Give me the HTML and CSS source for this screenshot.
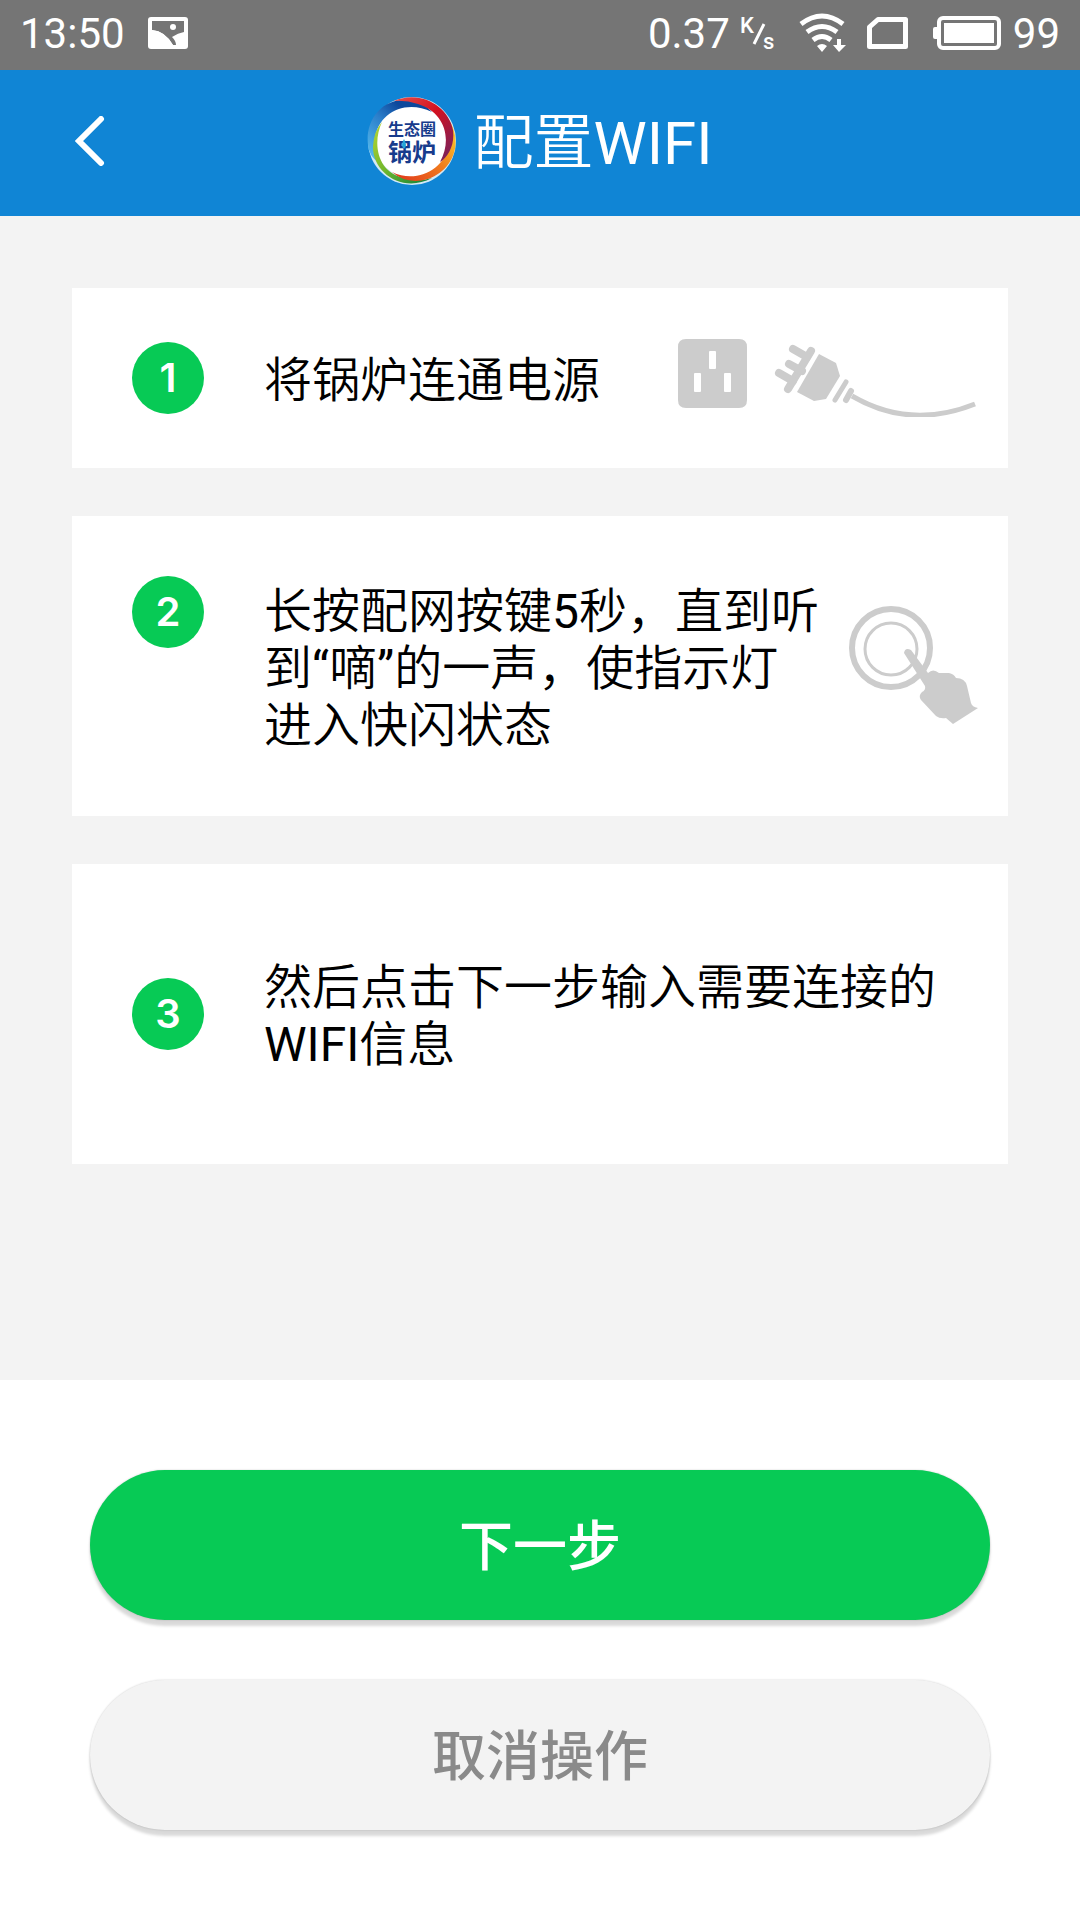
FILE: index.html
```html
<!DOCTYPE html>
<html lang="zh-CN">
<head>
<meta charset="utf-8">
<meta name="viewport" content="width=device-width, initial-scale=1">
<title>配置WIFI</title>
<link rel="stylesheet" href="styles.css">
</head>
<body>
<div class="status-bar">
  <div class="status-group status-left">
    <time>13:50</time>
    <svg width="40" height="32" viewBox="0 0 40 32" aria-hidden="true">
      <rect width="40" height="32" rx="3" fill="#fff"/>
      <path d="M4 4H36V15Q30 16 24 20Q28 24 28 28H25Q17 14 4 13Z" fill="#757575"/>
      <path d="M4 13Q17 14 25 28H4Z" fill="#fff"/>
      <circle cx="25" cy="10" r="3" fill="#fff"/>
    </svg>
  </div>
  <div class="status-group status-right">
    <span>0.37</span>
    <svg class="rate-unit" width="40" height="48" viewBox="0 0 40 48">
      <text x="2" y="24">K</text>
      <path d="M16 35L26 15" stroke="#fff" stroke-width="3"/>
      <text x="25" y="40">s</text>
    </svg>
    <svg class="wifi" width="48" height="40" viewBox="0 0 48 40" aria-hidden="true">
      <g fill="none" stroke="#fff" stroke-width="5">
        <path d="M2 11Q23 -5 44 11"/>
        <path d="M8 19Q23 8 38 19"/>
        <path d="M14 27Q23 20 32 27"/>
      </g>
      <path d="M18 33Q23 29 28 33L23 39ZM38 26H42V32H47L40 39L34 32H38Z" fill="#fff"/>
    </svg>
    <svg class="sim" width="42" height="32" viewBox="0 0 42 32" aria-hidden="true">
      <path d="M11 2.5H38.500V29.500H2.500V10Z" fill="none" stroke="#fff" stroke-width="5" stroke-linejoin="round"/>
    </svg>
    <svg width="68" height="34" viewBox="0 0 68 34" aria-hidden="true">
      <rect x="6" y="2" width="60" height="30" rx="4" fill="none" stroke="#fff" stroke-width="4"/>
      <rect x="11" y="7" width="50" height="20" fill="#fff"/>
      <path d="M4 11V23H2Q0 23 0 21V13Q0 11 2 11Z" fill="#fff"/>
    </svg>
    <span class="battery-level">99</span>
  </div>
</div>

<header class="app-bar">
  <button class="back" type="button" aria-label="返回">
    <svg width="30" height="50" viewBox="0 0 30 50" aria-hidden="true">
      <path d="M26 3L4 25L26 47" fill="none" stroke="#fff" stroke-width="6" stroke-linecap="round"/>
    </svg>
  </button>
  <div class="brand">
    <svg class="logo" width="90" height="90" viewBox="0 0 90 90">
      <defs>
        <linearGradient id="blue" x1="0" y1="1" x2="1" y2="0"><stop offset="0" stop-color="#5cc4f2"/><stop offset=".45" stop-color="#2b7fcb"/><stop offset=".7" stop-color="#0d489c"/></linearGradient>
        <linearGradient id="red" x1="0" y1="0" x2="1" y2="1"><stop offset="0" stop-color="#e8504a"/><stop offset=".45" stop-color="#d4111f"/><stop offset="1" stop-color="#6d2463"/></linearGradient>
        <linearGradient id="green" x1="0" y1="0" x2="1" y2="1"><stop offset="0" stop-color="#b9d733"/><stop offset=".5" stop-color="#6fb62c"/><stop offset="1" stop-color="#087c3d"/></linearGradient>
        <linearGradient id="orange" x1="0" y1="1" x2="1" y2="0"><stop offset="0" stop-color="#df321b"/><stop offset=".5" stop-color="#f07b1e"/><stop offset="1" stop-color="#ffe32d"/></linearGradient>
      </defs>
      <circle cx="45" cy="45" r="44" fill="#d4e9f5"/>
      <circle cx="45" cy="45" r="37" fill="#fff"/>
      <path d="M1 49C-2 25 14 3 39 4Q56 5 65 16C38 3 11 17 8 43Q5 57 11 66Q2 60 1 49Z" fill="url(#blue)"/>
      <path d="M15 26C5 47 10 78 39 82Q52 86 65 82C35 98 5 76 6 50Q7 35 15 26Z" fill="url(#green)"/>
      <path d="M25 76C49 88 78 74 82 48Q84 34 79 20C97 42 89 73 61 83Q40 89 25 76Z" fill="url(#orange)"/>
      <path d="M27 5C54 -7 82 11 86 34C88 49 81 61 73 66C86 42 77 16 51 8Q39 4 27 5Z" fill="url(#red)"/>
      <text class="logo-top" x="45" y="39">生态圈</text>
      <text class="logo-bottom" x="45" y="65">锅炉</text>
      <path d="M37 43Q41 50 37 53Q33 50 37 43Z" fill="#24a6d8"/>
    </svg>
    <h1>配置WIFI</h1>
  </div>
</header>

<main>
  <ol class="steps">
    <li class="step step-short">
      <span class="badge">1</span>
      <p>将锅炉连通电源</p>
      <svg width="300" height="78" viewBox="0 0 300 78" aria-hidden="true">
        <g fill="#ccc">
          <path fill-rule="evenodd" d="M8 0H61Q69 0 69 8V61Q69 69 61 69H8Q0 69 0 61V8Q0 0 8 0ZM32 12Q31 12 31 13V29Q31 30 32 30H37Q38 30 38 29V13Q38 12 37 12ZM17 34Q16 34 16 35V52Q16 53 17 53H22Q23 53 23 52V35Q23 34 22 34ZM47 34Q46 34 46 35V52Q46 53 47 53H52Q53 53 53 52V35Q53 34 52 34Z"/>
          <path d="M141 15L158 24L162 37L148 60L136 62L119 53Z"/>
        </g>
        <g fill="none" stroke="#ccc" stroke-linecap="round">
          <path d="M133 12L110 50" stroke-width="8"/>
          <path d="M115 10L129 18M111 25L124 32M101 34L115 42" stroke-width="8"/>
          <path d="M168 43L157 61" stroke-width="5"/>
          <path d="M173 52L168 61" stroke-width="6"/>
          <path d="M174 57Q232 91 297 65" stroke-width="5" stroke-linecap="butt"/>
        </g>
      </svg>
    </li>
    <li class="step">
      <span class="badge badge-top">2</span>
      <p>长按配网按键5秒，直到听<br>到“嘀”的一声，使指示灯<br>进入快闪状态</p>
      <svg width="129" height="120" viewBox="0 0 129 120" aria-hidden="true">
        <circle cx="42" cy="42" r="39" fill="none" stroke="#ccc" stroke-width="6"/>
        <circle cx="42" cy="43" r="26" fill="none" stroke="#ccc" stroke-width="3"/>
        <path d="M55 47Q56 41 62 44L79 67Q84 62 90 67L100 67Q105 68 107 72Q116 72 118 80L122 97Q123 101 129 102L104 118L97 112Q91 113 87 110L72 94Q69 90 73 86Q77 84 76 80Z" fill="#ccc"/>
      </svg>
    </li>
    <li class="step">
      <span class="badge">3</span>
      <p>然后点击下一步输入需要连接的WIFI信息</p>
    </li>
  </ol>
  <div class="actions">
    <button class="action primary" type="button">下一步</button>
    <button class="action secondary" type="button">取消操作</button>
  </div>
</main>
</body>
</html>
```
FILE: styles.css
```css
* {
  box-sizing: border-box;
  margin: 0;
  padding: 0;
}

body {
  background: #fff;
  color: #000;
  font-family: Roboto, "Noto Sans CJK SC DemiLight", "Noto Sans CJK SC", sans-serif;
  font-weight: 400;
}

svg {
  display: block;
  flex: none;
}

button {
  border: 0;
  font-family: inherit;
  cursor: pointer;
}

.status-bar {
  display: flex;
  justify-content: space-between;
  height: 70px;
  padding: 0 20px 4px;
  background: #757575;
  color: #fff;
  font-size: 42px;
}

.status-group {
  display: flex;
  align-items: center;
}

.status-left {
  gap: 23px;
}

.rate-unit {
  margin: 0 21px 0 8px;
  fill: #fff;
  font-size: 22px;
  font-weight: 500;
}

.sim {
  margin: 0 24px 0 20px;
}

.battery-level {
  margin-left: 12px;
}

.app-bar {
  display: grid;
  grid-template-columns: 1fr auto 1fr;
  align-items: center;
  height: 146px;
  padding-bottom: 4px;
  background: #1085d5;
  color: #fff;
}

.back {
  justify-self: start;
  padding: 24px 75px;
  background: none;
}

.brand {
  display: flex;
  align-items: center;
  gap: 16px;
}

.logo {
  fill: #173b8c;
  font-family: "Noto Sans CJK SC", sans-serif;
  font-weight: 700;
  text-anchor: middle;
}

.logo-top {
  font-size: 16px;
}

.logo-bottom {
  font-size: 24px;
}

h1 {
  padding-top: 6px;
  font-size: 60px;
  font-weight: 400;
  line-height: 72px;
}

.steps {
  display: flex;
  flex-direction: column;
  gap: 48px;
  padding: 72px 72px 216px;
  background: #f3f3f3;
  list-style: none;
}

.step {
  display: flex;
  align-items: center;
  min-height: 300px;
  padding: 60px 30px 60px 60px;
  background: #fff;
}

.step-short {
  min-height: 180px;
  padding-block: 50px;
}

.step p {
  flex: 1;
  padding-top: 4px;
  font-size: 48px;
  line-height: 57px;
}

.badge {
  display: grid;
  place-items: center;
  flex: none;
  width: 72px;
  height: 72px;
  margin-right: 60px;
  padding-bottom: 2px;
  border-radius: 50%;
  background: #07ca55;
  color: #fff;
  font-family: Inter, sans-serif;
  font-size: 40px;
  font-weight: 600;
}

.badge-top {
  align-self: flex-start;
}

.actions {
  display: flex;
  flex-direction: column;
  gap: 60px;
  padding: 90px;
}

.action {
  height: 150px;
  padding-bottom: 6px;
  border-radius: 75px;
  box-shadow: 0 6px 3px rgba(0, 0, 0, 0.15), 0 0 2px rgba(0, 0, 0, 0.2);
  font-family: Roboto, "Noto Sans CJK SC", sans-serif;
  font-size: 54px;
  font-weight: 500;
}

.primary {
  background: #07ca55;
  color: #fff;
}

.secondary {
  background: #f3f3f3;
  color: #8a8a8a;
}
```
